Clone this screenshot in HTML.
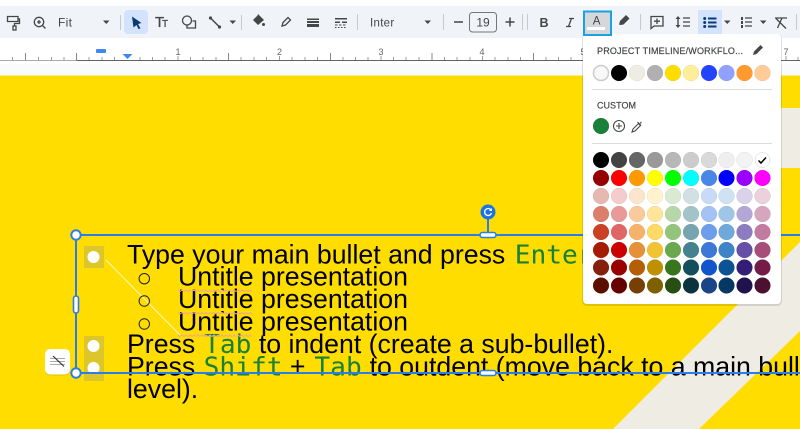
<!DOCTYPE html>
<html><head><meta charset="utf-8"><style>
html,body{margin:0;padding:0;background:#fff;overflow:hidden}
svg{display:block}
text{font-family:"Liberation Sans",sans-serif}
.m{font-family:"DejaVu Sans Mono",monospace;fill:#188038;font-size:26.2px}
.b text{font-size:26.7px;fill:#000}
.ic{fill:none;stroke:#444746;stroke-width:1.3}
.f{fill:#444746}
</style></head><body>
<svg width="800" height="429" viewBox="0 0 800 429" xmlns="http://www.w3.org/2000/svg">
<rect width="800" height="429" fill="#fff"/>
<rect y="6" width="800" height="32" fill="#f0f4f9"/>
<rect y="64" width="800" height="12" fill="#f9fbfd"/>
<!-- ruler -->
<path d="M0 60.500H76.500" stroke="#aaa" fill="none"/><path d="M76.500 60.500H800" stroke="#5f6368" fill="none"/>
<path stroke="#9a9da0" fill="none" d="M12.500 57v3M38.500 57v3M51.500 57v3M64 57v3M89 57v3M102 57v3M114.500 57v3M140 57v3M152.500 57v3M165 57v3M178 56v4M190.500 57v3M203 57v3M216 57v3M241 57v3M254 57v3M266.500 57v3M279.500 56v4M292 57v3M305 57v3M317.500 57v3M343 57v3M355.500 57v3M368 57v3M381 56v4M393.500 57v3M406 57v3M419 57v3M444.500 57v3M457 57v3M470 57v3M482.500 56v4M495 57v3M508 57v3M520.500 57v3M546 57v3M558.500 57v3M571 57v3M786 56v4M798 57v3"/>
<path stroke="#888" fill="none" d="M25.500 53v7M76.500 53v7M228.500 53v7M330.500 53v7M432 53v7M533.500 53v7"/>
<g font-size="9" fill="#5f6368" text-anchor="middle"><text x="178" y="55">1</text><text x="279.500" y="55">2</text><text x="381" y="55">3</text><text x="482" y="55">4</text><text x="583" y="55">5</text><text x="786" y="55">7</text></g>
<rect x="96" y="49" width="10" height="4" rx="1" fill="#4285f4"/>
<path d="M122.500 54h10l-5 5z" fill="#4285f4"/>
<!-- slide -->
<rect y="75.500" width="800" height="354" fill="#ffdd00"/>
<path d="M800 242 613 429H699L800 331Z" fill="#efede3"/>
<rect x="778" y="108" width="22" height="60" fill="#efede3"/>
<!-- bullet highlight -->
<rect x="84" y="246" width="20" height="22" fill="#dcc62c"/>
<rect x="84" y="336" width="20" height="45" fill="#dcc62c"/>
<circle cx="93.500" cy="257" r="6" fill="#fff"/><circle cx="93.500" cy="346" r="6" fill="#fff"/><circle cx="93.500" cy="368" r="6" fill="#fff"/>
<path d="M106 260 180 335" stroke="#fff8c8" stroke-width="1" fill="none"/>
<g fill="none" stroke="#222" stroke-width="1"><circle cx="144.300" cy="278.700" r="5.200"/><circle cx="144.300" cy="301" r="5.200"/><circle cx="144.300" cy="324" r="5.200"/></g>
<!-- text -->
<g class="b">
<text x="127" y="263.500">Type your main bullet and press <tspan class="m" dx="2">Enter</tspan>.</text>
<text x="178" y="285.500">Untitle presentation</text>
<text x="178" y="308">Untitle presentation</text>
<text x="178" y="330.500">Untitle presentation</text>
<text x="127" y="353">Press <tspan class="m" dx="1.500">Tab</tspan> to indent (create a sub-bullet).</text>
<text x="127" y="375.500">Press <tspan class="m" dx="1">Shift</tspan> + <tspan class="m" dx="1.500">Tab</tspan><tspan dx=".5"> to outdent (move back to a main bullet</tspan></text>
<text x="127" y="398">level).</text>
</g>
<g fill="none" stroke="#f2a59a" stroke-width="1">
<path d="M178 290l2 1.500 2-1.500 2 1.500 2-1.500 2 1.500 2-1.500 2 1.500 2-1.500 2 1.500 2-1.500 2 1.500 2-1.500 2 1.500 2-1.500 2 1.500 2-1.500 2 1.500 2-1.500 2 1.500 2-1.500 2 1.500 2-1.500 2 1.500 2-1.500 2 1.500 2-1.500 2 1.500 2-1.500 2 1.500 2-1.500 2 1.500 2-1.500 2 1.500 2-1.500 2 1.500 2-1.500 2 1.500"/>
<path d="M178 312.500l2 1.500 2-1.500 2 1.500 2-1.500 2 1.500 2-1.500 2 1.500 2-1.500 2 1.500 2-1.500 2 1.500 2-1.500 2 1.500 2-1.500 2 1.500 2-1.500 2 1.500 2-1.500 2 1.500 2-1.500 2 1.500 2-1.500 2 1.500 2-1.500 2 1.500 2-1.500 2 1.500 2-1.500 2 1.500 2-1.500 2 1.500 2-1.500 2 1.500 2-1.500 2 1.500 2-1.500 2 1.500"/>
<path d="M178 335l2 1.500 2-1.500 2 1.500 2-1.500 2 1.500 2-1.500 2 1.500 2-1.500 2 1.500 2-1.500 2 1.500 2-1.500 2 1.500 2-1.500 2 1.500 2-1.500 2 1.500 2-1.500 2 1.500 2-1.500 2 1.500 2-1.500 2 1.500 2-1.500 2 1.500 2-1.500 2 1.500 2-1.500 2 1.500 2-1.500 2 1.500 2-1.500 2 1.500 2-1.500 2 1.500 2-1.500 2 1.500"/>
</g>
<!-- selection -->
<g fill="none" stroke="#2b7de9" stroke-width="2">
<path d="M800 235H76V373H800"/><path d="M488 215V233"/>
<circle cx="76" cy="235" r="4.700" fill="#fff"/><circle cx="76" cy="373" r="4.700" fill="#fff"/>
<rect x="73.500" y="296" width="5" height="17" rx="2.500" fill="#fff" stroke-width="1.600"/>
<rect x="480" y="232.500" width="16" height="5" rx="2.500" fill="#fff" stroke-width="1.600"/>
<rect x="480" y="370.500" width="16" height="5" rx="2.500" fill="#fff" stroke-width="1.600"/>
</g>
<circle cx="488" cy="212" r="7.500" fill="#1a73e8"/>
<path d="M491 210a3.500 3.500 0 1 0 .5 3" fill="none" stroke="#fff" stroke-width="1.300"/>
<path d="M492 208v3h-3z" fill="#fff"/>
<rect x="45" y="350" width="25" height="25.500" rx="5" fill="#000" opacity=".12"/>
<rect x="45" y="349" width="25" height="25.500" rx="5" fill="#fff"/>
<path d="M50 358.500H65M50 361.500H65M50 364.500H65" stroke="#aaa" fill="none"/><path d="M53 356 64 366.500" stroke="#333" stroke-width="1.200" fill="none"/>
<!-- popup -->
<rect x="582" y="34" width="200" height="272" rx="5" fill="#000" opacity=".12"/>
<rect x="583" y="34" width="198" height="270" rx="4" fill="#fff"/>
<text x="597" y="54" font-size="9" fill="#444746" stroke="#444746" stroke-width=".2" textLength="146" lengthAdjust="spacing">PROJECT TIMELINE/WORKFLO...</text>
<path d="M753 55l1-3.500 6.500-6.500 2.500 2.500-6.500 6.500z" fill="#444746"/>
<path d="M592 89.500H772M592 143.500H772" stroke="#dadce0" fill="none"/>
<text x="597" y="108.500" font-size="9" fill="#444746" stroke="#444746" stroke-width=".2" textLength="39" lengthAdjust="spacing">CUSTOM</text>
<g stroke="#00000018" stroke-width=".5">
<circle cx="601" cy="73" r="7.500" fill="#f8f8f8" stroke="#ccc" stroke-width="1.500"/>
<circle cx="619" cy="73" r="8" fill="#000"/><circle cx="637" cy="73" r="8" fill="#efede3"/><circle cx="655" cy="73" r="8" fill="#b0b0b0"/><circle cx="673" cy="73" r="8" fill="#ffdd00"/><circle cx="691" cy="73" r="8" fill="#ffee99"/><circle cx="709" cy="73" r="8" fill="#2244ff"/><circle cx="726.500" cy="73" r="8" fill="#91a1ff"/><circle cx="744.500" cy="73" r="8" fill="#ff9a2e"/><circle cx="762.500" cy="73" r="8" fill="#ffcc99"/>
<circle cx="601" cy="126" r="8" fill="#188038"/>
<circle cx="601" cy="160" r="8" fill="#000"/><circle cx="619" cy="160" r="8" fill="#434343"/><circle cx="637" cy="160" r="8" fill="#666"/><circle cx="655" cy="160" r="8" fill="#999"/><circle cx="673" cy="160" r="8" fill="#b7b7b7"/><circle cx="691" cy="160" r="8" fill="#ccc"/><circle cx="709" cy="160" r="8" fill="#d9d9d9"/><circle cx="726.500" cy="160" r="8" fill="#efefef"/><circle cx="744.500" cy="160" r="8" fill="#f3f3f3"/><circle cx="762.500" cy="160" r="7.500" fill="#fff" stroke="#ccc"/>
<circle cx="601" cy="178" r="8" fill="#980000"/><circle cx="619" cy="178" r="8" fill="#f00"/><circle cx="637" cy="178" r="8" fill="#f90"/><circle cx="655" cy="178" r="8" fill="#ff0"/><circle cx="673" cy="178" r="8" fill="#0f0"/><circle cx="691" cy="178" r="8" fill="#0ff"/><circle cx="709" cy="178" r="8" fill="#4a86e8"/><circle cx="726.500" cy="178" r="8" fill="#00f"/><circle cx="744.500" cy="178" r="8" fill="#90f"/><circle cx="762.500" cy="178" r="8" fill="#f0f"/>
<circle cx="601" cy="196" r="8" fill="#e6b8af"/><circle cx="619" cy="196" r="8" fill="#f4cccc"/><circle cx="637" cy="196" r="8" fill="#fce5cd"/><circle cx="655" cy="196" r="8" fill="#fff2cc"/><circle cx="673" cy="196" r="8" fill="#d9ead3"/><circle cx="691" cy="196" r="8" fill="#d0e0e3"/><circle cx="709" cy="196" r="8" fill="#c9daf8"/><circle cx="726.500" cy="196" r="8" fill="#cfe2f3"/><circle cx="744.500" cy="196" r="8" fill="#d9d2e9"/><circle cx="762.500" cy="196" r="8" fill="#ead1dc"/>
<circle cx="601" cy="214" r="8" fill="#dd7e6b"/><circle cx="619" cy="214" r="8" fill="#ea9999"/><circle cx="637" cy="214" r="8" fill="#f9cb9c"/><circle cx="655" cy="214" r="8" fill="#ffe599"/><circle cx="673" cy="214" r="8" fill="#b6d7a8"/><circle cx="691" cy="214" r="8" fill="#a2c4c9"/><circle cx="709" cy="214" r="8" fill="#a4c2f4"/><circle cx="726.500" cy="214" r="8" fill="#9fc5e8"/><circle cx="744.500" cy="214" r="8" fill="#b4a7d6"/><circle cx="762.500" cy="214" r="8" fill="#d5a6bd"/>
<circle cx="601" cy="232" r="8" fill="#cc4125"/><circle cx="619" cy="232" r="8" fill="#e06666"/><circle cx="637" cy="232" r="8" fill="#f6b26b"/><circle cx="655" cy="232" r="8" fill="#ffd966"/><circle cx="673" cy="232" r="8" fill="#93c47d"/><circle cx="691" cy="232" r="8" fill="#76a5af"/><circle cx="709" cy="232" r="8" fill="#6d9eeb"/><circle cx="726.500" cy="232" r="8" fill="#6fa8dc"/><circle cx="744.500" cy="232" r="8" fill="#8e7cc3"/><circle cx="762.500" cy="232" r="8" fill="#c27ba0"/>
<circle cx="601" cy="250" r="8" fill="#a61c00"/><circle cx="619" cy="250" r="8" fill="#c00"/><circle cx="637" cy="250" r="8" fill="#e69138"/><circle cx="655" cy="250" r="8" fill="#f1c232"/><circle cx="673" cy="250" r="8" fill="#6aa84f"/><circle cx="691" cy="250" r="8" fill="#45818e"/><circle cx="709" cy="250" r="8" fill="#3c78d8"/><circle cx="726.500" cy="250" r="8" fill="#3d85c6"/><circle cx="744.500" cy="250" r="8" fill="#674ea7"/><circle cx="762.500" cy="250" r="8" fill="#a64d79"/>
<circle cx="601" cy="267.500" r="8" fill="#85200c"/><circle cx="619" cy="267.500" r="8" fill="#900"/><circle cx="637" cy="267.500" r="8" fill="#b45f06"/><circle cx="655" cy="267.500" r="8" fill="#bf9000"/><circle cx="673" cy="267.500" r="8" fill="#38761d"/><circle cx="691" cy="267.500" r="8" fill="#134f5c"/><circle cx="709" cy="267.500" r="8" fill="#1155cc"/><circle cx="726.500" cy="267.500" r="8" fill="#0b5394"/><circle cx="744.500" cy="267.500" r="8" fill="#351c75"/><circle cx="762.500" cy="267.500" r="8" fill="#741b47"/>
<circle cx="601" cy="285.500" r="8" fill="#5b0f00"/><circle cx="619" cy="285.500" r="8" fill="#660000"/><circle cx="637" cy="285.500" r="8" fill="#783f04"/><circle cx="655" cy="285.500" r="8" fill="#7f6000"/><circle cx="673" cy="285.500" r="8" fill="#274e13"/><circle cx="691" cy="285.500" r="8" fill="#0c343d"/><circle cx="709" cy="285.500" r="8" fill="#1c4587"/><circle cx="726.500" cy="285.500" r="8" fill="#073763"/><circle cx="744.500" cy="285.500" r="8" fill="#20124d"/><circle cx="762.500" cy="285.500" r="8" fill="#4c1130"/>
</g>
<path d="M758.500 160.500l2.500 2.500 5-5.500" fill="none" stroke="#000" stroke-width="1.500"/>
<circle cx="619" cy="126" r="5.500" class="ic" style="stroke-width:1.100"/><path d="M619 123v6M616 126h6" class="ic" style="stroke-width:1.100"/>
<path d="M632 132l1-3 5.500-5.500 2 2-5.500 5.500zM637.500 122l3.500 3.500M640 123.500l1.500-1.500" class="ic" style="stroke-width:1.100"/>
<!-- toolbar icons -->
<path d="M120.500 15v15M241.500 15v15M357.500 14v16M443.500 14v16M522.500 14v16M527.500 14v16M640.500 14v16M796.500 14v16" stroke="#c7c9cc" stroke-width="1" fill="none"/>
<g class="ic">
<path d="M7.500 16.500H18V21.500H7.500zM18 19H19.500V23.500H14.500V26"/><rect x="13" y="26" width="3" height="4"/>
<circle cx="39" cy="22" r="4.700"/><path d="M42.500 25.500l3 3M39 20v4M37 22h4"/>
<circle cx="187" cy="20.500" r="4.500"/><path d="M192.500 21H195.500V28H187V25.500"/>
<path d="M210.500 18l9 9" style="stroke-width:1.500"/>
<path d="M282 26l1-3.500 5-5 2.500 2.500-5 5z"/>
<path d="M651 16.500H663V26H654L651 28.500ZM657 18.500v5.500M654 21.200h6"/>
<path d="M683 18H690M683 22H690M683 26H690"/>
<path d="M745 18H752M745 22H752M745 26H752"/>
<path d="M775 18H787M776 18.500l10 10M782 18l-4.500 10"/>
<path d="M454 22H463M505.500 22H514.500M510 17.500V26.500" style="stroke-width:1.500"/>
</g>
<rect x="124" y="10" width="24" height="24" rx="4" fill="#d3e3fd"/>
<path d="M132 16.500 141.500 23 138 24 140.500 28.500 138.500 29 136.500 25 133.500 27.500Z" fill="#0b3b71"/>
<path class="f" d="M103 20.500h6.500l-3.250 3.500zM229.500 20.500h6.500l-3.250 3.500zM424.500 20.500h6.500l-3.250 3.500zM724 20.500h6.500l-3.250 3.500zM760 20.500h6.500l-3.250 3.500z"/>
<text x="155" y="27" font-size="15" fill="#444746" stroke="#444746" stroke-width=".3">T</text><text x="162" y="27" font-size="10" fill="#444746" stroke="#444746" stroke-width=".3">T</text>
<circle cx="210.500" cy="18" r="1.600" class="f"/><circle cx="219.500" cy="27" r="1.600" class="f"/>
<path class="f" d="M258 14l-.5 1.500L253 20l5 5 6-5z"/><circle cx="263.500" cy="24.500" r="1.500" class="f"/>
<path class="f" d="M307 18.500h12v1.500h-12zM307 21h12v2h-12zM307 24h12v3h-12z"/>
<path class="f" d="M335 18h12v1.500h-12zM335 21.500h5v1.500h-5zM342 21.500h5v1.500h-5zM335 24.500h2.500v1h-2.500zM339 24.500h2.500v1h-2.500zM343 24.500h2.500v1h-2.500zM335 27h1.500v1h-1.500zM338 27h1.500v1h-1.500zM341 27h1.500v1h-1.500zM344 27h1.500v1h-1.500z"/>
<text x="58" y="26.500" font-size="12" fill="#444746" letter-spacing=".3">Fit</text>
<text x="370" y="26.500" font-size="11.500" fill="#444746" letter-spacing=".3">Inter</text>
<rect x="469.500" y="12.500" width="27" height="19.500" rx="3" fill="none" stroke="#747775"/>
<text x="483" y="26.500" font-size="12" fill="#444746" text-anchor="middle">19</text>
<text x="539.500" y="27" font-size="12.500" font-weight="bold" fill="#444746">B</text>
<path d="M569 18.500H574M566 26.500H571M571.500 18.500 568.500 26.500" fill="none" stroke="#444746" stroke-width="1.300"/>
<rect x="584" y="11.500" width="27" height="23.500" fill="#d5d8db" stroke="#1ba1e2" stroke-width="2"/>
<text x="592.700" y="24.500" font-size="11.500" fill="#444746">A</text>
<rect x="587" y="27" width="18" height="3" fill="#fff"/>
<path class="f" d="M619 24.500l1-3.500 6-6 3.500 3.500-6 6-3 .5z"/>
<path class="f" d="M678 16l2.500 3h-5zM678 28l2.500-3h-5zM677.300 19h1.400v6h-1.400z"/>
<rect x="698" y="10" width="24" height="24" fill="#d3e3fd"/>
<path d="M708 17.500h8.500v2h-8.500zM708 21.500h8.500v2h-8.500zM708 25.500h8.500v2h-8.500z" fill="#0b3b71"/>
<circle cx="704.700" cy="18.500" r="1.500" fill="#0b3b71"/><circle cx="704.700" cy="22.500" r="1.500" fill="#0b3b71"/><circle cx="704.700" cy="26.500" r="1.500" fill="#0b3b71"/>
<path class="f" d="M741 17h2v3h-2zM741 21h2v3h-2zM741 25h2v3h-2z"/>
</svg>
</body></html>
